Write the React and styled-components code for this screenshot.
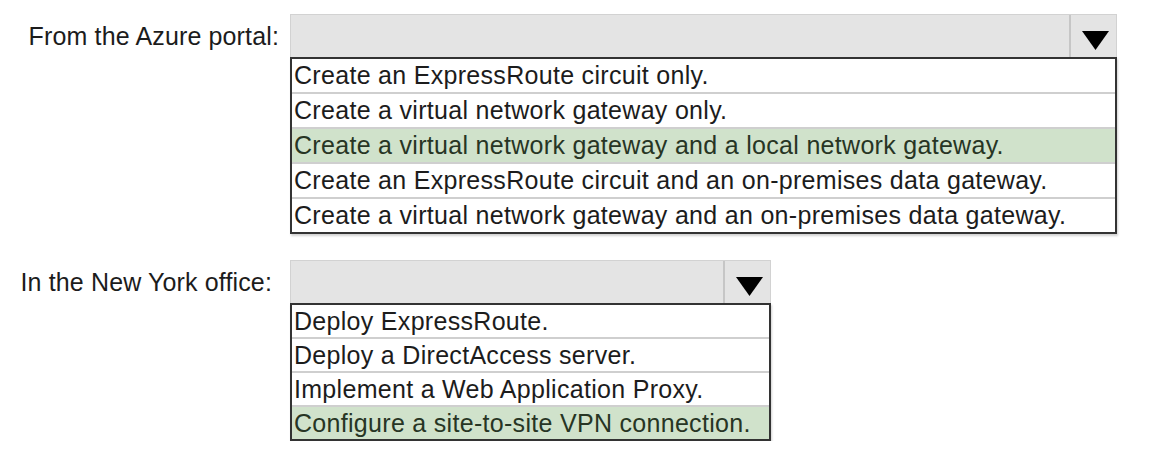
import styled, { createGlobalStyle } from "styled-components";

const GlobalStyle = createGlobalStyle`
  html, body {
    margin: 0;
    padding: 0;
    background: #ffffff;
  }
  body {
    font-family: "Liberation Sans", Arial, sans-serif;
    color: #1c1c1c;
  }
`;

const questions = [
  {
    label: "From the Azure portal:",
    pad: 11,
    width: 827,
    rowH: 33,
    options: [
      "Create an ExpressRoute circuit only.",
      "Create a virtual network gateway only.",
      "Create a virtual network gateway and a local network gateway.",
      "Create an ExpressRoute circuit and an on-premises data gateway.",
      "Create a virtual network gateway and an on-premises data gateway.",
    ],
    selected: 2,
  },
  {
    label: "In the New York office:",
    pad: 18,
    width: 481,
    rowH: 32,
    options: [
      "Deploy ExpressRoute.",
      "Deploy a DirectAccess server.",
      "Implement a Web Application Proxy.",
      "Configure a site-to-site VPN connection.",
    ],
    selected: 3,
  },
];

export default function App() {
  return (
    <Page>
      <GlobalStyle />
      {questions.map((q) => (
        <Row key={q.label}>
          <Label $pad={q.pad}>{q.label}</Label>
          <Dropdown $width={q.width}>
            <Header>
              <Blank />
              <ArrowCell>
                <svg width="27" height="19" viewBox="0 0 27 19">
                  <polygon points="0,0 27,0 13.5,19" fill="#000" />
                </svg>
              </ArrowCell>
            </Header>
            <List>
              {q.options.map((opt, i) => (
                <Option key={opt} $h={q.rowH} $picked={i === q.selected}>
                  {opt}
                </Option>
              ))}
            </List>
          </Dropdown>
        </Row>
      ))}
    </Page>
  );
}

const Page = styled.div`
  display: flex;
  flex-direction: column;
  gap: 26px;
  padding-top: 14px;
`;

const Row = styled.div`
  display: flex;
  align-items: flex-start;
`;

const Label = styled.div`
  width: 290px;
  box-sizing: border-box;
  padding-right: ${(p) => p.$pad}px;
  padding-top: 8px;
  text-align: right;
  font-size: 25px;
  letter-spacing: 0.14px;
  white-space: nowrap;
`;

const Dropdown = styled.div`
  width: ${(p) => p.$width}px;
  display: flex;
  flex-direction: column;
`;

const Header = styled.div`
  display: flex;
  height: 43px;
  box-sizing: border-box;
  background: #e4e4e4;
  border: 1px solid #d2d2d2;
  border-bottom: none;
`;

const Blank = styled.div`
  flex: 1;
`;

const ArrowCell = styled.div`
  width: 47px;
  display: flex;
  align-items: flex-end;
  justify-content: center;
  padding-bottom: 7px;
  padding-left: 3px;
  box-sizing: border-box;
  border-left: 2px solid #c6c6c6;
`;

const List = styled.div`
  display: flex;
  flex-direction: column;
  border: 2px solid #333333;
  box-shadow: 1px 2px 2px rgba(0, 0, 0, 0.18);
`;

const Option = styled.div`
  height: ${(p) => p.$h}px;
  display: flex;
  align-items: center;
  padding-left: 2px;
  font-size: 25px;
  letter-spacing: 0.3px;
  white-space: nowrap;
  background: ${(p) => (p.$picked ? "#d0e2cb" : "#ffffff")};
  color: ${(p) => (p.$picked ? "#273524" : "#1c1c1c")};
  & + & {
    border-top: 2px solid #cfcfcf;
  }
`;
